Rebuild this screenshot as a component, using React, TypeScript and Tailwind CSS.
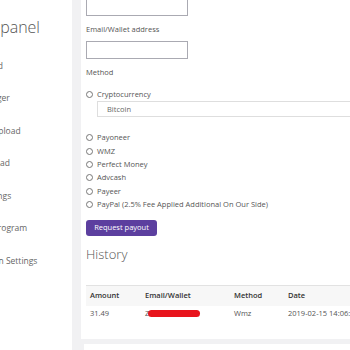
import React from "react";

const navItems = [
  "Dashboard",
  "File Manager",
  "Remote Upload",
  "Multi Upload",
  "User Settings",
  "Referral Program",
  "Conversion Settings",
];

const methods = ["Payoneer", "WMZ", "Perfect Money", "Advcash", "Payeer", "PayPal (2.5% Fee Applied Additional On Our Side)"];

function Radio({ label }: { label: string }) {
  return (
    <label className="flex items-center h-[13.3px] gap-[4px] text-[7.5px] text-[#555]">
      <span className="w-[7px] h-[7px] rounded-full border border-[#777] bg-white shrink-0" />
      <span className="whitespace-nowrap">{label}</span>
    </label>
  );
}

export default function App() {
  return (
    <div
      className="flex w-[350px] h-[350px] overflow-hidden bg-[#f1f1f3]"
      style={{ fontFamily: '"Open Sans", "Liberation Sans", sans-serif' }}
    >
      {/* Sidebar */}
      <div className="w-[72px] shrink-0 bg-white overflow-hidden">
        <div className="pt-[17px]">
          <div className="ml-[-38px] h-[20px] leading-[20px] text-[16px] font-light text-[#555] whitespace-nowrap">
            User panel
          </div>
          <ul className="ml-[-41px] mt-[21.5px] flex flex-col gap-[19.5px]">
            {navItems.map((item) => (
              <li key={item} className="h-[13px] leading-[13px] text-[8.5px] text-[#666] whitespace-nowrap">
                {item}
              </li>
            ))}
          </ul>
        </div>
      </div>

      {/* Main */}
      <div className="flex-1 min-w-0 pl-[9px] mt-[-10px]">
        <div className="bg-white pl-[5px] pt-[7px] pb-[17px] w-[300px]">
          <div className="w-[102px] h-[19px] border border-[#aaaab2]" />
          <div className="mt-[7px] h-[13px] leading-[13px] text-[7.5px] text-[#555]">Email/Wallet address</div>
          <div className="mt-[5px] w-[102px] h-[18px] border border-[#aaaab2]" />
          <div className="mt-[7px] h-[13px] leading-[13px] text-[7.5px] text-[#555]">Method</div>

          <div className="mt-[8.5px]">
            <Radio label="Cryptocurrency" />
          </div>
          <div className="mt-[0.5px] ml-[11px] h-[16px] border border-[#dedede] pl-[9px] flex items-center text-[7.5px] text-[#666]">
            Bitcoin
          </div>

          <div className="mt-[14px] flex flex-col">
            {methods.map((m) => (
              <Radio key={m} label={m} />
            ))}
          </div>

          <button className="mt-[9px] w-[71px] h-[16px] rounded-[3px] bg-[#5c3f9f] text-white text-[7.5px] flex items-center justify-center">
            Request payout
          </button>

          <h2 className="mt-[9px] h-[18px] leading-[18px] text-[13px] font-light text-[#555]">History</h2>

          <table className="mt-[22px] w-[290px] text-[7.5px] text-[#555] border-collapse">
            <thead>
              <tr className="bg-[#f7f7f7] border-t border-[#e2e2e2] h-[20px] text-[#333]">
                <th className="w-[55px] pl-[4px] text-left font-semibold">Amount</th>
                <th className="w-[89px] pl-[4px] text-left font-semibold">Email/Wallet</th>
                <th className="w-[54px] pl-[4px] text-left font-semibold">Method</th>
                <th className="pl-[4px] text-left font-semibold">Date</th>
              </tr>
            </thead>
            <tbody>
              <tr className="h-[16px]">
                <td className="pl-[4px]">31.49</td>
                <td className="pl-[4px] whitespace-nowrap">
                  <span className="inline-flex items-center">
                    Z
                    <span className="ml-[-1px] inline-block w-[52px] h-[7px] rounded-full bg-[#e8141c]" />
                  </span>
                </td>
                <td className="pl-[4px]">Wmz</td>
                <td className="pl-[4px] whitespace-nowrap">2019-02-15 14:06:24</td>
              </tr>
            </tbody>
          </table>
        </div>

        <div className="mt-[5px] ml-[3px] bg-white h-[40px] w-[300px]" />
      </div>
    </div>
  );
}
